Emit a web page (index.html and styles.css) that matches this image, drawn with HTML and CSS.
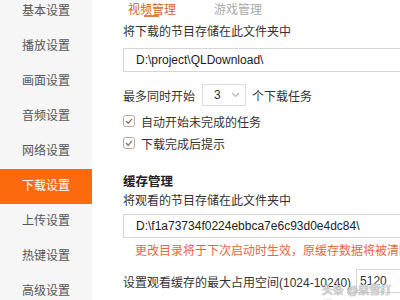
FILE: index.html
```html
<!DOCTYPE html>
<html lang="zh-CN">
<head>
<meta charset="utf-8">
<link rel="stylesheet" href="styles.css">
</head>
<body>
<div class="app">
  <nav class="side">
    <div class="item">基本设置</div>
    <div class="item">播放设置</div>
    <div class="item">画面设置</div>
    <div class="item">音频设置</div>
    <div class="item">网络设置</div>
    <div class="item active">下载设置</div>
    <div class="item">上传设置</div>
    <div class="item">热键设置</div>
    <div class="item">高级设置</div>
  </nav>
  <main class="content">
    <div class="tabs">
      <span class="tab active">视频管理</span>
      <span class="tab">游戏管理</span>
    </div>
    <div class="label">将下载的节目存储在此文件夹中</div>
    <div class="input">D:\project\QLDownload\</div>
    <div class="row row-select">
      <span>最多同时开始</span>
      <div class="select"><span>3</span>
        <svg class="chev" width="9" height="6" viewBox="0 0 9 6"><path d="M1 1 L4.5 4.5 L8 1" fill="none" stroke="#b8b8b8" stroke-width="1.2"/></svg>
      </div>
      <span>个下载任务</span>
    </div>
    <div class="check check-first">
      <svg class="box" width="12" height="12" viewBox="0 0 12 12"><rect x="0.5" y="0.5" width="11" height="11" rx="2" fill="#fff" stroke="#b9a9a0"/><path d="M3 6 L5.2 8.3 L9 3.8" fill="none" stroke="#9a6b55" stroke-width="1.3"/></svg>
      <span>自动开始未完成的任务</span>
    </div>
    <div class="check">
      <svg class="box" width="12" height="12" viewBox="0 0 12 12"><rect x="0.5" y="0.5" width="11" height="11" rx="2" fill="#fff" stroke="#b9a9a0"/><path d="M3 6 L5.2 8.3 L9 3.8" fill="none" stroke="#9a6b55" stroke-width="1.3"/></svg>
      <span>下载完成后提示</span>
    </div>
    <div class="section">缓存管理</div>
    <div class="label label-tight">将观看的节目存储在此文件夹中</div>
    <div class="input input-2">D:\f1a73734f0224ebbca7e6c93d0e4dc84\</div>
    <div class="hint">更改目录将于下次启动时生效，原缓存数据将被清除</div>
    <div class="row row-size">
      <span>设置观看缓存的最大占用空间(1024-10240)</span>
      <div class="num">5120</div>
    </div>
  </main>
  <div class="watermark">头条 @泉雪打闪</div>
</div>
</body>
</html>
```

FILE: styles.css
```css
* { box-sizing: border-box; }
html, body { margin: 0; padding: 0; }
body {
  width: 400px;
  height: 300px;
  overflow: hidden;
  background: #fff;
  font-family: "Liberation Sans", "Noto Sans CJK SC", sans-serif;
  font-size: 12px;
  color: #333;
}
.app {
  position: relative;
  display: flex;
  width: 400px;
  height: 300px;
}
.side {
  width: 92px;
  flex: none;
  background: #f6f6f6;
  padding-top: 0;
  margin-top: -6px;
}
.item {
  height: 35px;
  line-height: 35px;
  padding-left: 22px;
  color: #555;
}
.item.active {
  background: #fb6a0d;
  color: #fff;
}
.content {
  flex: 1;
  padding-left: 31px;
  min-width: 0;
  white-space: nowrap;
}
.tabs {
  height: 20px;
  display: flex;
  gap: 38px;
  padding-left: 5px;
}
.tab {
  position: relative;
  line-height: 20px;
  color: #aaa;
}
.tab.active {
  color: #d9622c;
}
.tab.active::after {
  content: "";
  position: absolute;
  left: 16px;
  top: 15px;
  width: 15px;
  height: 2px;
  background: #e0804f;
}
.label {
  margin-top: 4px;
  height: 16px;
  line-height: 16px;
}
.input {
  margin-top: 8px;
  height: 24px;
  line-height: 22px;
  border: 1px solid #d6d6d6;
  border-right: none;
  padding-left: 12px;
  color: #222;
}
.row {
  display: flex;
  align-items: center;
}
.row-select {
  margin-top: 12px;
  height: 22px;
}
.select {
  margin-left: 7px;
  margin-right: 6px;
  width: 44px;
  height: 22px;
  border: 1px solid #dcdcdc;
  display: flex;
  align-items: center;
  justify-content: space-between;
  padding-left: 11px;
  padding-right: 5px;
}
.check {
  margin-top: 4px;
  height: 18px;
  display: flex;
  align-items: center;
  gap: 6px;
}
.check-first { margin-top: 6px; }
.box { flex: none; }
.section {
  margin-top: 21px;
  height: 18px;
  line-height: 18px;
  font-weight: bold;
  font-size: 12.5px;
  color: #222;
}
.label-tight { margin-top: 2px; }
.input-2 { margin-top: 5px; }
.hint {
  margin-top: 5px;
  height: 16px;
  line-height: 16px;
  padding-left: 12px;
  color: #e5673f;
}
.row-size {
  margin-top: 10px;
  height: 24px;
}
.num {
  margin-left: 5px;
  height: 24px;
  line-height: 22px;
  width: 60px;
  border: 1px solid #d6d6d6;
  border-right: none;
  padding-left: 3px;
}
.watermark {
  position: absolute;
  left: 322px;
  top: 281px;
  font-size: 11px;
  color: rgba(255,255,255,0.85);
  text-shadow: 0 0 1px #777, 0 0 1px #777;
}
```
